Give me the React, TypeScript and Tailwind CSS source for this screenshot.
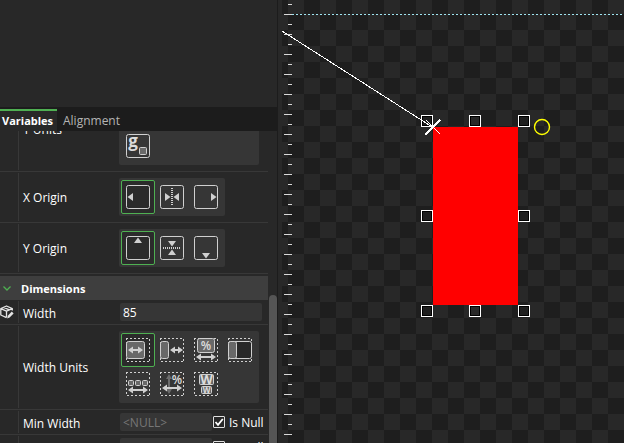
import React, { useState } from "react";

type Kids = { children: React.ReactNode };

const INK = "#d0d0d0";

/* ---------- icon parts ---------- */

const Frame = () => <rect x="0.5" y="0.5" width="23" height="23" rx="2" />;

const Dashed = () => (
  <rect x="0.5" y="0.5" width="23" height="23" strokeDasharray="2 2" strokeDashoffset="1" shapeRendering="crispEdges" />
);

const Solid = ({ d, fill = INK }: { d: string; fill?: string }) => <path d={d} fill={fill} stroke="none" />;

const HArrow = ({ from, to, y }: { from: number; to: number; y: number }) => (
  <g fill={INK} stroke="none">
    <path d={`M${from} ${y}l5-3.5v7zM${to} ${y}l-5-3.5v7z`} />
    <rect x={from + 4} y={y - 1} width={to - from - 8} height="2" />
  </g>
);

const Glyph = ({ x, y, size, bold, children }: { x: number; y: number; size: number; bold?: boolean; children: string }) => (
  <text
    x={x}
    y={y}
    fontSize={size}
    fontWeight={bold ? 700 : 600}
    textAnchor="middle"
    fill="#dcdcdc"
    stroke="none"
  >
    {children}
  </text>
);

/* ---------- property grid ---------- */

const Choice = ({ label, active, children }: Kids & { label: string; active?: boolean }) => (
  <button
    type="button"
    aria-label={label}
    aria-pressed={!!active}
    className={
      active
        ? "flex size-[34px] items-center justify-center rounded-xs border border-[#4fb052] bg-[#2b2b2b]"
        : "flex size-[34px] items-center justify-center rounded-xs border border-transparent"
    }
  >
    <svg width="24" height="24" viewBox="0 0 24 24" fill="none" stroke={INK} aria-hidden="true">
      {children}
    </svg>
  </button>
);

const Choices = ({ children }: Kids) => (
  <div className="flex max-w-[140px] flex-wrap rounded-xs bg-[#363636] p-0.5">{children}</div>
);

const Row = ({ label, icon, compact, children }: Kids & { label: React.ReactNode; icon?: React.ReactNode; compact?: boolean }) => (
  <div className="flex shrink-0 border-b border-[#383838]">
    <div className="my-px flex w-[19px] shrink-0 items-center border-r border-[#383838]">{icon}</div>
    <div className={compact ? "flex w-[100px] shrink-0 items-center pt-1 pl-1" : "flex w-[100px] shrink-0 items-center pt-0.5 pl-1"}>
      {label}
    </div>
    <div className="flex min-h-6 min-w-0 flex-1 items-center">{children}</div>
  </div>
);

const fieldClass =
  "h-[18px] w-full min-w-0 rounded-xs bg-[#363636] px-[3px] text-white outline-none placeholder:text-[#777777]";

const NullableField = ({ id }: { id: string }) => {
  const [isNull, setNull] = useState(true);
  return (
    <div className="flex flex-1 items-center gap-px pr-1.5 pl-px">
      <input id={id} placeholder="<NULL>" className={fieldClass} />
      <label className="flex w-[49px] shrink-0 items-center gap-1 whitespace-nowrap">
        <span className="relative flex size-3 shrink-0">
          <input
            type="checkbox"
            checked={isNull}
            onChange={(e) => setNull(e.target.checked)}
            className="size-3 appearance-none rounded-[1px] border border-[#e0e0e0] bg-[#282828]"
          />
          {isNull && (
            <svg viewBox="0 0 12 12" className="pointer-events-none absolute inset-0 size-3" fill="none" stroke="#ffffff" strokeWidth="1.8" aria-hidden="true">
              <path d="M2.5 6l2.5 2.8L9.8 3" />
            </svg>
          )}
        </span>
        <span className="pt-0.5">Is Null</span>
      </label>
    </div>
  );
};

const CubeIcon = () => (
  <svg width="14" height="14" viewBox="0 0 14 14" fill="none" stroke="#e4e4e4" strokeWidth="1.3" strokeLinejoin="round" aria-hidden="true">
    <path d="M6.5 12.6L0.8 10V3.6L6.5 1l5.8 2.6v2M0.8 3.6l5.7 2.6 5.8-2.6M6.5 6.2v6.4M3.6 2.3l5.8 2.6" />
    <path d="M7.2 13.4l0.6-2.6 4-4.2 1.8 1.8-4 4.2z" fill="#e4e4e4" stroke="none" />
  </svg>
);

const Properties = () => (
  <div className="flex min-h-0 flex-1">
    <div className="flex min-w-0 flex-1 flex-col overflow-hidden">
      <div className="-mt-11 flex flex-col">
        <Row label="Y Units">
          <div className="my-1.5 flex h-[72px] w-[140px] items-end rounded-xs bg-[#363636] p-0.5">
            <Choice label="Pixels from baseline">
              <Frame />
              <Glyph x={7} y={13} size={17} bold>g</Glyph>
              <rect x="13.5" y="13.5" width="7" height="7" rx="1" fill="#6a6a6a" />
            </Choice>
          </div>
        </Row>

        <Row label="X Origin">
          <div className="my-1.5">
            <Choices>
              <Choice label="Left" active>
                <Frame />
                <Solid d="M1.5 12l5.5-4v8z" />
              </Choice>
              <Choice label="Center">
                <Frame />
                <path d="M12 3v18" strokeWidth="2" strokeDasharray="1 1" />
                <Solid d="M10.5 12L5 8v8zM13.5 12l5.5-4v8z" />
              </Choice>
              <Choice label="Right">
                <Frame />
                <Solid d="M22.5 12L17 8v8z" />
              </Choice>
            </Choices>
          </div>
        </Row>

        <Row label="Y Origin">
          <div className="my-1.5">
            <Choices>
              <Choice label="Top" active>
                <Frame />
                <Solid d="M12 1.5l4 5.5H8z" />
              </Choice>
              <Choice label="Middle">
                <Frame />
                <path d="M3 12h18" strokeWidth="2" strokeDasharray="1 1" />
                <Solid d="M12 10.5L8 5h8zM12 13.5l4 5.5H8z" />
              </Choice>
              <Choice label="Bottom">
                <Frame />
                <Solid d="M12 22.5L8 17h8z" />
              </Choice>
            </Choices>
          </div>
        </Row>

        <button
          type="button"
          aria-expanded="true"
          className="mt-0.5 flex h-6 items-center gap-2.5 bg-[#3e3e3e] pt-0.5 pl-[3px] text-[11px] font-bold"
        >
          <svg width="8" height="8" viewBox="0 0 8 8" fill="none" stroke="#4fb052" strokeWidth="1.3" aria-hidden="true">
            <path d="M0.5 1.5l3.5 3.5L7.5 1.5" />
          </svg>
          Dimensions
        </button>

        <Row compact label={<label htmlFor="width">Width</label>} icon={<CubeIcon />}>
          <div className="flex flex-1 pr-1.5 pl-px">
            <input id="width" defaultValue="85" className={fieldClass} />
          </div>
        </Row>

        <Row label="Width Units">
          <div className="my-1.5">
            <Choices>
              <Choice label="Absolute" active>
                <Dashed />
                <rect x="0.5" y="3.5" width="18" height="17" rx="2" fill="#686868" />
                <HArrow from={2} to={17} y={12} />
              </Choice>
              <Choice label="Relative to parent">
                <Dashed />
                <rect x="0.5" y="3.5" width="8" height="17" rx="2" fill="#686868" />
                <HArrow from={10} to={23} y={12} />
              </Choice>
              <Choice label="Percentage of parent">
                <Dashed />
                <rect x="3.5" y="0.5" width="17" height="14" rx="2" fill="#686868" />
                <Glyph x={12} y={12} size={12}>%</Glyph>
                <HArrow from={2} to={22} y={19} />
              </Choice>
              <Choice label="Ratio of container">
                <Dashed />
                <rect x="0.5" y="3.5" width="23" height="17" rx="2" fill="#282828" />
                <rect x="0.5" y="3.5" width="8" height="17" rx="2" fill="#686868" />
              </Choice>
              <Choice label="Relative to children">
                <Dashed />
                <rect x="2.5" y="8.5" width="5" height="5" rx="1" fill="#686868" />
                <rect x="9.5" y="8.5" width="5" height="5" rx="1" fill="#686868" />
                <rect x="16.5" y="8.5" width="5" height="5" rx="1" fill="#686868" />
                <HArrow from={2} to={22} y={18} />
              </Choice>
              <Choice label="Percentage of other dimension">
                <Dashed />
                <Solid d="M9 2l3 5h-2v10h2l-3 5-3-5h2V7H6z" fill="#6c6c6c" />
                <Glyph x={17} y={12} size={12}>%</Glyph>
                <HArrow from={2} to={22} y={16} />
              </Choice>
              <Choice label="Percentage of source file">
                <Dashed />
                <rect x="5.5" y="2.5" width="14" height="10" rx="1" fill="#686868" />
                <Glyph x={12.5} y={12} size={13} bold>W</Glyph>
                <rect x="7.5" y="14.5" width="10" height="7" rx="1" fill="#686868" />
                <Glyph x={12.5} y={21} size={8} bold>W</Glyph>
              </Choice>
            </Choices>
          </div>
        </Row>

        <Row compact label={<label htmlFor="min-width">Min Width</label>}>
          <NullableField id="min-width" />
        </Row>
        <Row compact label={<label htmlFor="max-width">Max Width</label>}>
          <NullableField id="max-width" />
        </Row>
      </div>
    </div>
    <div className="flex w-[9px] shrink-0 flex-col pl-px">
      <div className="mt-[164px] flex-1 rounded-t-full bg-[#555555]" />
    </div>
  </div>
);

/* ---------- canvas ---------- */

const handles = [
  [143, 115], [191, 115], [240, 115],
  [143, 210], [240, 210],
  [143, 305], [191, 305], [240, 305],
];

const Canvas = () => (
  <svg className="h-full min-w-0 flex-1 bg-[#282828]" aria-label="Canvas">
    <defs>
      <pattern id="checker" x="10" y="14" width="32" height="32" patternUnits="userSpaceOnUse">
        <path d="M0 0h16v16H0zM16 16h16v16H16z" fill="#1e1e1e" />
      </pattern>
      <pattern id="ticks" x="6" y="14" width="8" height="20" patternUnits="userSpaceOnUse">
        <path d="M0 0h8v1H0zM4 10h4v1H4z" fill="#d8d8d8" />
      </pattern>
    </defs>
    <rect x="4" width="100%" height="100%" fill="url(#checker)" />
    <line x1="14" x2="100%" y1="14.5" y2="14.5" stroke="#9fe4f0" strokeDasharray="2 2" />
    <rect x="6" width="8" height="100%" fill="url(#ticks)" />
    <rect x="155" y="127" width="85" height="178" fill="#ff0000" />
    {handles.map(([x, y]) => (
      <g key={`${x}-${y}`} fill="none">
        <rect x={x + 0.5} y={y + 0.5} width="11" height="11" stroke="#ffffff" />
        <rect x={x + 1.5} y={y + 1.5} width="9" height="9" stroke="#000000" />
      </g>
    ))}
    <g stroke="#ffffff" shapeRendering="crispEdges">
      <path d="M4 31L155 127.5" />
      <path d="M148 120l14 14" />
      <path d="M147 135l15-15" strokeWidth="1.6" />
    </g>
    <circle cx="264" cy="127" r="7.5" fill="none" stroke="#ffff00" strokeWidth="1.4" />
  </svg>
);

export default function App() {
  return (
    <div className="flex h-screen overflow-hidden bg-[#282828] font-['Open_Sans',sans-serif] text-xs text-white">
      <aside className="flex w-[278px] shrink-0 flex-col border-r border-[#1c1c1c]">
        <div className="h-[107px] shrink-0" />
        <div role="tablist" className="flex shrink-0 bg-[#1c1c1c] pt-0.5">
          <button
            type="button"
            role="tab"
            aria-selected="true"
            className="h-[22px] w-[57px] border-t-2 border-[#4fb052] bg-[#282828] pl-0.5 text-left text-[11px] font-bold"
          >
            Variables
          </button>
          <button type="button" role="tab" aria-selected="false" className="h-[22px] border-t-2 border-transparent px-1.5 text-[#b4b4b4]">
            Alignment
          </button>
        </div>
        <Properties />
      </aside>
      <Canvas />
    </div>
  );
}
